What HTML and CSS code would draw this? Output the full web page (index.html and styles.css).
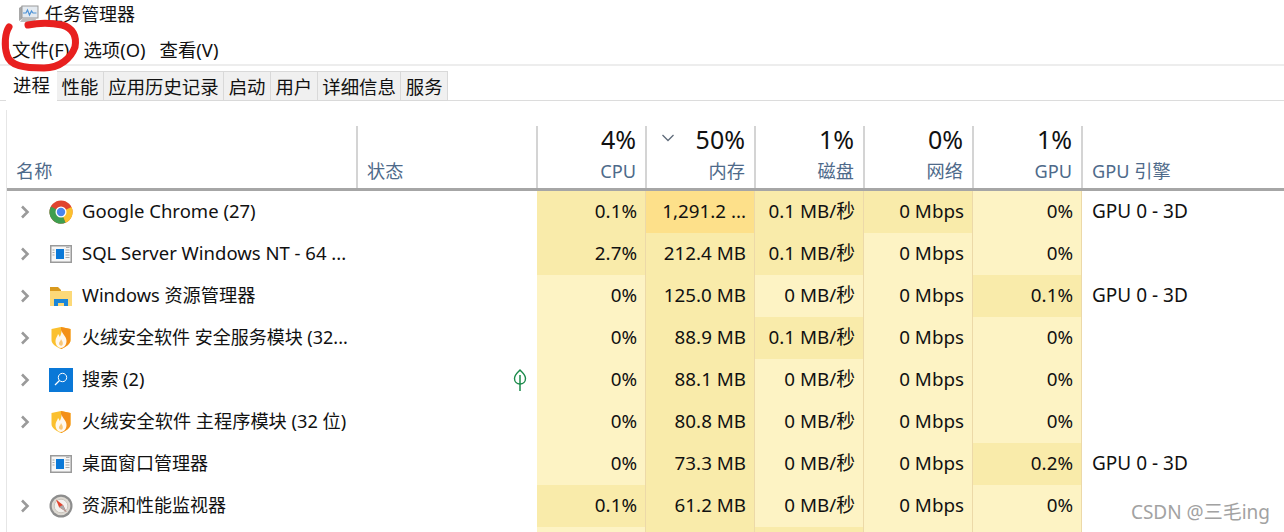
FILE: index.html
```html
<!DOCTYPE html>
<html lang="zh-CN">
<head>
<meta charset="utf-8">
<title>任务管理器</title>
<link rel="stylesheet" href="styles.css">
</head>
<body>
<svg width="0" height="0" class="defs">
  <symbol id="i-app" viewBox="-1 -3 24 24">
    <rect x="0.75" y="0.75" width="20.5" height="16.5" fill="#f6f6f6" stroke="#9a9a9a" stroke-width="1.5"/>
    <rect x="6" y="4" width="8" height="10" fill="#0a78d7"/>
    <path d="M2.500 5h2M2.500 7.500h2M2.500 10h2M15.500 5h4M15.500 7.500h4M15.500 10h4M15.500 12.500h4M16 2.400h3.500" stroke="#a8a8a8" stroke-width="1"/>
  </symbol>
  <symbol id="i-shield" viewBox="0 0 24 24">
    <path d="M2.500 3 12 1l9.500 2v11c0 4-4.500 7-9.500 9-5-2-9.500-5-9.500-9z" fill="#fbc02e"/>
    <path d="M12 1l9.500 2v11c0 4-4.500 7-9.500 9z" fill="#f39019"/>
    <path d="M12.500 4c.5 4 5 6 5 11 0 4-2.500 7-5.500 7s-5.500-3-5.500-7c0-3 2-4.500 2.500-7 1 1 1.300 2 1.800 3 1-2 1.700-4 1.700-7z" fill="#fff8ee"/>
    <path d="M12 13c1 2 2.500 3.500 1.500 6-1 1.500-3.500.5-3.500-1.500 0-2 2-2.500 2-4.500z" fill="#f9c777"/>
  </symbol>
  <symbol id="i-chev" viewBox="0 0 10 14">
    <path d="M2 1.500 7.500 7 2 12.500" fill="none" stroke="#9a9a9a" stroke-width="2.600"/>
  </symbol>
</svg>

<header class="title">
  <svg class="title-icon" viewBox="0 0 22 20" width="22" height="20">
    <path d="M1 4 4 2v13l-3 2z" fill="#a8a8a8"/>
    <rect x="4" y="2" width="16" height="12" fill="#e4eaf0" stroke="#999"/>
    <path d="M5 9h3l1.500-3 2 5 2-4 1.500 2h3.500" fill="none" stroke="#4f93d6" stroke-width="1.200"/>
    <path d="M2 18h14l3-4H5z" fill="#bdbdbd"/>
  </svg>
  <span>任务管理器</span>
</header>

<nav class="menu">
  <span>文件(F)</span><span>选项(O)</span><span>查看(V)</span>
</nav>

<div class="tabs">
  <span class="tab tab-on">进程</span><span class="tab">性能</span><span class="tab">应用历史记录</span><span class="tab">启动</span><span class="tab">用户</span><span class="tab">详细信息</span><span class="tab">服务</span>
</div>

<main class="table">
  <div class="head">
    <div class="hcell hname"><b class="hlabel">名称</b></div>
    <div class="hcell hstatus"><b class="hlabel">状态</b></div>
    <div class="hcell hnum"><b class="hpct">4%</b><b class="hlabel">CPU</b></div>
    <div class="hcell hnum">
      <svg class="sort" viewBox="0 0 14 8" width="14" height="8"><path d="M1.500 1 7 6.500 12.500 1" fill="none" stroke="#5f6b7a" stroke-width="1.300"/></svg>
      <b class="hpct">50%</b><b class="hlabel">内存</b></div>
    <div class="hcell hnum"><b class="hpct">1%</b><b class="hlabel">磁盘</b></div>
    <div class="hcell hnum"><b class="hpct">0%</b><b class="hlabel">网络</b></div>
    <div class="hcell hnum"><b class="hpct">1%</b><b class="hlabel">GPU</b></div>
    <div class="hcell hengine"><b class="hlabel">GPU 引擎</b></div>
  </div>

  <div class="row">
    <div class="name"><svg class="chev"><use href="#i-chev"/></svg>
      <svg class="icon" viewBox="0 0 24 24"><circle cx="12" cy="12" r="11.500" fill="#e0432f"/><path d="M12 12 22.500 7a11.500 11.500 0 0 1-6 15.700z" fill="#fbc02d"/><path d="M12 12 16.500 22.700A11.500 11.500 0 0 1 2 6.500z" fill="#3e9e4f"/><circle cx="12" cy="12" r="5.500" fill="#fff"/><circle cx="12" cy="12" r="4.200" fill="#4a85ee"/></svg>
      <span class="lat">Google Chrome (27)</span></div>
    <div class="status"></div>
    <div class="num h1">0.1%</div><div class="num h2">1,291.2 ...</div><div class="num h1">0.1 MB/秒</div><div class="num h1">0 Mbps</div><div class="num">0%</div>
    <div class="engine">GPU 0 - 3D</div>
  </div>

  <div class="row">
    <div class="name"><svg class="chev"><use href="#i-chev"/></svg><svg class="icon"><use href="#i-app"/></svg><span class="lat">SQL Server Windows NT - 64 ...</span></div>
    <div class="status"></div>
    <div class="num h1">2.7%</div><div class="num h1">212.4 MB</div><div class="num h1">0.1 MB/秒</div><div class="num">0 Mbps</div><div class="num">0%</div>
    <div class="engine"></div>
  </div>

  <div class="row">
    <div class="name"><svg class="chev"><use href="#i-chev"/></svg>
      <svg class="icon" viewBox="0 0 24 24"><path d="M1 3h8l3 3v3H1z" fill="#d99a1e"/><rect x="1" y="7" width="22" height="15" fill="#fcd978"/><path d="M5 22v-7h14v7h-4v-3H9v3z" fill="#1a86d8"/></svg>
      <span class="mix">Windows 资源管理器</span></div>
    <div class="status"></div>
    <div class="num">0%</div><div class="num h1">125.0 MB</div><div class="num">0 MB/秒</div><div class="num">0 Mbps</div><div class="num h1">0.1%</div>
    <div class="engine">GPU 0 - 3D</div>
  </div>

  <div class="row">
    <div class="name"><svg class="chev"><use href="#i-chev"/></svg><svg class="icon"><use href="#i-shield"/></svg><span>火绒安全软件 安全服务模块 (32...</span></div>
    <div class="status"></div>
    <div class="num">0%</div><div class="num h1">88.9 MB</div><div class="num h1">0.1 MB/秒</div><div class="num">0 Mbps</div><div class="num">0%</div>
    <div class="engine"></div>
  </div>

  <div class="row">
    <div class="name"><svg class="chev"><use href="#i-chev"/></svg>
      <svg class="icon" viewBox="0 0 24 24"><rect width="24" height="24" fill="#0a78d7"/><circle cx="13.500" cy="9.500" r="4.200" fill="none" stroke="#fff" stroke-width="1"/><path d="M10.500 12.500 6 17" stroke="#fff" stroke-width="1.200"/></svg>
      <span class="mix">搜索 (2)</span></div>
    <div class="status">
      <svg class="leaf" viewBox="0 0 14 24" width="14" height="24"><path d="M7 2C4 5 1.500 7 1.500 10.500 1.500 14 4 16 7 16s5.500-2 5.500-5.500C12.500 7 10 5 7 2z" fill="none" stroke="#1a8a4a" stroke-width="1.400"/><path d="M7 7v16" stroke="#1a8a4a" stroke-width="1.500"/></svg>
    </div>
    <div class="num">0%</div><div class="num h1">88.1 MB</div><div class="num">0 MB/秒</div><div class="num">0 Mbps</div><div class="num">0%</div>
    <div class="engine"></div>
  </div>

  <div class="row">
    <div class="name"><svg class="chev"><use href="#i-chev"/></svg><svg class="icon"><use href="#i-shield"/></svg><span class="mix">火绒安全软件 主程序模块 (32 位)</span></div>
    <div class="status"></div>
    <div class="num">0%</div><div class="num h1">80.8 MB</div><div class="num">0 MB/秒</div><div class="num">0 Mbps</div><div class="num">0%</div>
    <div class="engine"></div>
  </div>

  <div class="row">
    <div class="name"><i class="chev"></i><svg class="icon"><use href="#i-app"/></svg><span>桌面窗口管理器</span></div>
    <div class="status"></div>
    <div class="num">0%</div><div class="num h1">73.3 MB</div><div class="num">0 MB/秒</div><div class="num">0 Mbps</div><div class="num h1">0.2%</div>
    <div class="engine">GPU 0 - 3D</div>
  </div>

  <div class="row">
    <div class="name"><svg class="chev"><use href="#i-chev"/></svg>
      <svg class="icon" viewBox="0 0 24 24"><circle cx="12" cy="12" r="11.500" fill="#8d8d8d"/><circle cx="12" cy="12" r="9.300" fill="#ddd9d2"/><circle cx="12" cy="12" r="6.800" fill="#f3f1ee" stroke="#c9c4bd"/><path d="M7 5.500 14 11 17.500 18 10 13z" fill="#e2452f"/><path d="M10 13 17.500 18 14 11z" fill="#a8a8a8"/></svg>
      <span>资源和性能监视器</span></div>
    <div class="status"></div>
    <div class="num h1">0.1%</div><div class="num h1">61.2 MB</div><div class="num">0 MB/秒</div><div class="num">0 Mbps</div><div class="num">0%</div>
    <div class="engine"></div>
  </div>

  <div class="row">
    <div class="name"></div>
    <div class="status"></div>
    <div class="num"></div><div class="num h1"></div><div class="num h1"></div><div class="num"></div><div class="num"></div>
    <div class="engine"></div>
  </div>
</main>

<svg class="scribble" viewBox="0 0 90 80" width="90" height="80">
  <path d="M9 27C5 33 4 46 7 55 10 66 24 68 44 68 60 68 71 58 75 47 77 36 73 28 62 25 52 23 38 23 28 25" fill="none" stroke="#e8201f" stroke-width="7" stroke-linecap="round"/>
</svg>
<div class="mark">CSDN @三毛ing</div>
</body>
</html>
```

FILE: styles.css
```css
* { box-sizing: border-box; }
html, body { margin: 0; height: 532px; overflow: hidden; background: #fff; }
body {
  position: relative;
  font-family: "Noto Sans", "Noto Sans CJK SC", sans-serif;
  font-size: 18px;
  line-height: 24px;
  color: #111;
}
.defs { position: absolute; }
.title { height: 27px; display: flex; align-items: center; gap: 5px; padding-left: 18px; }
.title-icon { flex: none; }
.menu {
  height: 39px;
  padding: 11px 0 0 12px;
  display: flex;
  gap: 14px;
  font-size: 18.4px;
  border-bottom: 2px solid #ededed;
}
.tabs {
  height: 35px;
  padding: 5px 0 0 6px;
  display: flex;
  align-items: stretch;
  font-size: 18.4px;
  border-bottom: 1px solid #dcdcdc;
}
.tab {
  padding: 3px 4.500px 0 4.500px;
  background: #f0f0f0;
  border: 1px solid #d9d9d9;
  border-left: 0;
  margin-bottom: -1px;
  white-space: nowrap;
}
.tab-on { width: 51px; background: #fff; border: 0; padding: 2px 0 0 7px; }
.table { height: 422px; overflow: hidden; margin: 9px 0 0 6px; border-left: 1px solid #e6e6e6; }
.head, .row {
  display: grid;
  grid-template-columns: 350px 180px repeat(5, 109px) 1fr;
}
.head { padding: 16px 0 0 1px; height: 81px; border-bottom: 3px solid #a6a6a6; }
.hcell { position: relative; display: flex; flex-direction: column; justify-content: flex-end; border-right: 2px solid #d4d4d4; }
.hcell b { font-weight: 400; }
.hlabel { font-size: 18.200px; line-height: 24px; color: #4e6a8a; padding-bottom: 5px; }
.hname { padding-left: 8px; }
.hstatus { padding-left: 9px; }
.hengine { padding-left: 9px; border-right: 0; }
.hnum { text-align: right; padding-right: 9px; }
.hpct { font-size: 25px; line-height: 26px; color: #111; margin-bottom: 7px; }
.sort { position: absolute; left: 14px; top: 8px; }
.row { height: 42px; }
.name, .status, .engine { display: flex; align-items: center; white-space: nowrap; }
.name span { padding-bottom: 2px; }
.mix { font-size: 18.200px; }
.lat { font-size: 18.500px; }
.chev { width: 10px; height: 14px; flex: none; margin: 0 19px 0 13px; display: block; }
.icon { width: 24px; height: 24px; flex: none; margin-right: 9px; overflow: visible; }
.status { justify-content: flex-end; padding-right: 10px; }
.engine { padding: 0 0 2px 10px; font-size: 19px; }
.num {
  text-align: right;
  padding-right: 8px;
  font-size: 18.800px;
  line-height: 40px;
  background: #fdf3c4;
  border-right: 1px solid #ecd9a8;
  white-space: nowrap;
}
.h1 { background: #f9ebaa; }
.h2 { background: #fde08a; }
.scribble { position: absolute; left: 0; top: 0; }
.mark {
  position: absolute;
  right: 14px;
  bottom: 8px;
  font-size: 19px;
  line-height: 24px;
  color: #a2a2a2;
}
```
